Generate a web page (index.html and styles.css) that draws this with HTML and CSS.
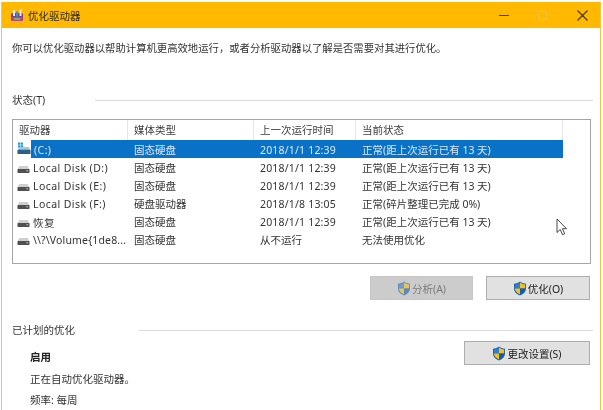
FILE: index.html
```html
<!DOCTYPE html>
<html lang="zh-CN">
<head>
<meta charset="utf-8">
<title>优化驱动器</title>
<link rel="stylesheet" href="styles.css">
</head>
<body>
<svg class="defs" width="0" height="0" aria-hidden="true">
  <defs>
    <symbol id="shield" viewBox="0 0 14 15">
      <path d="M7 .5C5.200 1.900 3.200 2.600 1 2.700v5c0 3 2.300 5.300 6 6.800 3.700-1.500 6-3.800 6-6.800v-5C10.800 2.600 8.800 1.900 7 .5z" fill="#1f5fa8"/>
      <path d="M7 1.500V7.500H1.900V3.500C3.900 3.300 5.500 2.600 7 1.500z" fill="#2f7fd0"/>
      <path d="M7 1.500C8.500 2.600 10.100 3.300 12.100 3.500V7.500H7z" fill="#f5c21b"/>
      <path d="M1.900 7.500H7V13.400C4 12.100 2 10.100 1.900 7.500z" fill="#f5c21b"/>
      <path d="M7 7.500H12.100C12 10.100 10 12.100 7 13.400z" fill="#1b5ba6"/>
    </symbol>
    <symbol id="drive" viewBox="0 0 14 8" preserveAspectRatio="none">
      <path d="M2.500 0H11.500L13.500 4H.5z" fill="#cfcfcf"/>
      <rect x=".5" y="3.500" width="13" height="4.500" rx=".8" fill="#505050"/>
      <rect x="10" y="5" width="2" height="1" fill="#d5d5d5"/>
    </symbol>
    <symbol id="sysdrive" viewBox="0 0 15 14">
      <path d="M1 1h2.500v2.500H1zM4 1h2.500v2.500H4zM1 4h2.500v2.500H1zM4 4h2.500v2.500H4z" fill="#2a9ad6"/>
      <path d="M2.500 6H12.500L14.500 9.500H.5z" fill="#9fc7de"/>
      <rect x=".5" y="9" width="14" height="4.500" rx=".6" fill="#2c5f86"/>
    </symbol>
  </defs>
</svg>
<main class="window">
  <header class="titlebar">
    <svg class="app-icon" viewBox="0 0 14 14" width="14" height="14" aria-hidden="true">
      <rect x="1" y="5" width="12" height="8" rx="1.500" fill="#7b3f98"/>
      <rect x="1.500" y="9" width="11" height="4" rx="1" fill="#c8456e"/>
      <rect x="3" y="2" width="2" height="6" fill="#e9e4ee"/>
      <rect x="6" y="3.500" width="2" height="5" fill="#4f88c7"/>
      <rect x="9.500" y="1" width="2" height="7" fill="#dfe6ef"/>
      <rect x="4" y="10" width="6" height="2" fill="#6fb35a"/>
    </svg>
    <span class="title-text">优化驱动器</span>
    <div class="controls">
      <span class="ctl ctl-min"></span>
      <span class="ctl ctl-max"></span>
      <svg class="ctl-close" viewBox="0 0 11 11" width="11" height="11" aria-hidden="true">
        <path d="M.5.5l10 10M10.500.5l-10 10" stroke="#3a3320" stroke-width="1.100" fill="none"/>
      </svg>
    </div>
  </header>

  <div class="content">
    <p class="intro">你可以优化驱动器以帮助计算机更高效地运行，或者分析驱动器以了解是否需要对其进行优化。</p>

    <div class="group-head group-status">
      <span>状态(T)</span>
      <i class="rule"></i>
    </div>

    <section class="listbox">
      <div class="row head">
        <div class="cell c1">驱动器</div>
        <div class="cell c2">媒体类型</div>
        <div class="cell c3">上一次运行时间</div>
        <div class="cell c4">当前状态</div>
      </div>
      <div class="row selected">
        <div class="cell c1"><svg class="ico sys"><use href="#sysdrive"/></svg><span class="name">(C:)</span></div>
        <div class="cell c2">固态硬盘</div>
        <div class="cell c3 date">2018/1/1 12:39</div>
        <div class="cell c4">正常(距上次运行已有 13 天)</div>
      </div>
      <div class="row">
        <div class="cell c1"><svg class="ico"><use href="#drive"/></svg><span class="name">Local Disk (D:)</span></div>
        <div class="cell c2">固态硬盘</div>
        <div class="cell c3 date">2018/1/1 12:39</div>
        <div class="cell c4">正常(距上次运行已有 13 天)</div>
      </div>
      <div class="row">
        <div class="cell c1"><svg class="ico"><use href="#drive"/></svg><span class="name">Local Disk (E:)</span></div>
        <div class="cell c2">固态硬盘</div>
        <div class="cell c3 date">2018/1/1 12:39</div>
        <div class="cell c4">正常(距上次运行已有 13 天)</div>
      </div>
      <div class="row">
        <div class="cell c1"><svg class="ico"><use href="#drive"/></svg><span class="name">Local Disk (F:)</span></div>
        <div class="cell c2">硬盘驱动器</div>
        <div class="cell c3 date">2018/1/8 13:05</div>
        <div class="cell c4">正常(碎片整理已完成 0%)</div>
      </div>
      <div class="row">
        <div class="cell c1"><svg class="ico"><use href="#drive"/></svg><span class="name">恢复</span></div>
        <div class="cell c2">固态硬盘</div>
        <div class="cell c3 date">2018/1/1 12:39</div>
        <div class="cell c4">正常(距上次运行已有 13 天)</div>
      </div>
      <div class="row">
        <div class="cell c1"><svg class="ico"><use href="#drive"/></svg><span class="name name-long">\\?\Volume{1de8...</span></div>
        <div class="cell c2">固态硬盘</div>
        <div class="cell c3">从不运行</div>
        <div class="cell c4">无法使用优化</div>
      </div>
    </section>

    <div class="actions">
      <button class="btn btn-analyze" disabled><svg class="shield"><use href="#shield"/></svg>分析(A)</button>
      <button class="btn btn-optimize"><svg class="shield"><use href="#shield"/></svg>优化(O)</button>
    </div>

    <div class="group-head group-plan">
      <span>已计划的优化</span>
      <i class="rule"></i>
    </div>

    <div class="plan">
      <div class="plan-text">
        <strong>启用</strong>
        <span>正在自动优化驱动器。</span>
        <span>频率: 每周</span>
      </div>
      <button class="btn btn-settings"><svg class="shield"><use href="#shield"/></svg>更改设置(S)</button>
    </div>
  </div>

  <svg class="cursor" viewBox="0 0 12 18" width="12" height="18" aria-hidden="true">
    <path d="M1 1v13.500l3.200-3 2.300 5.200 2.200-1-2.300-5H10.500z" fill="#fff" stroke="#333" stroke-width=".9" stroke-linejoin="round"/>
  </svg>
</main>
</body>
</html>
```
FILE: styles.css
```css
* { box-sizing: border-box; }
html, body { margin: 0; padding: 0; }
body {
  width: 603px;
  height: 410px;
  overflow: hidden;
  background: #fff;
  font-family: "Noto Sans", "Noto Sans CJK SC", sans-serif;
  font-size: 10.5px;
  color: #333;
}
.defs { position: absolute; }
.window {
  position: relative;
  width: 600px;
  height: 410px;
  margin: 2px 0 0 1px;
  border-left: 1px solid #f3c64a;
  border-right: 1px solid #f3c64a;
  background: #fff;
  overflow: hidden;
  filter: blur(.3px);
}
.titlebar {
  height: 26px;
  background: #ffb900;
  display: flex;
  align-items: center;
  padding-left: 8px;
  color: #2e2a1c;
}
.app-icon { margin-right: 4px; }
.controls {
  margin-left: auto;
  display: flex;
  align-items: center;
  padding-right: 12px;
}
.ctl-min { width: 10px; height: 1px; background: #4a3d10; margin-right: 29px; }
.ctl-max { width: 9px; height: 9px; border: 1px solid #f0c23c; margin-right: 30px; }
.content { padding: 0 9px 0 10px; }
.intro { margin: 0; padding-top: 12px; line-height: 16px; height: 28px; font-size: 10.35px; white-space: nowrap; }
.group-head { display: flex; align-items: center; line-height: 14px; }
.group-status { margin-top: 37px; }
.group-status .rule { margin-left: 50px; }
.group-plan { margin-top: 23px; }
.group-plan .rule { margin-left: 64px; }
.group-head .rule { flex: 1; height: 1px; background: #d9d9d9; margin-right: -2px; }
.listbox {
  margin-top: 12px;
  height: 145px;
  border: 1px solid #a5a5a5;
  background: #fff;
}
.row { display: grid; width: 550px; grid-template-columns: 115px 126px 102px 207px; height: 18px; align-items: center; }
.head { height: 20px; color: #3c3c3c; }
.head .cell { height: 20px; line-height: 20px; border-right: 1px solid #e6e6e6; }
.cell { padding-left: 6px; white-space: nowrap; overflow: hidden; }
.c1 { display: flex; align-items: center; overflow: visible; }
.row:not(.head) .c1 { padding-left: 4px; }
.ico { width: 13px; height: 7px; margin-top: 4px; margin-right: 3px; flex: none; }
.ico.sys { width: 14px; height: 14px; margin-top: -3px; margin-right: 2px; }
.name { letter-spacing: .42px; padding-top: 2px; }
.name-long { letter-spacing: .15px; }
.selected { background: linear-gradient(to right, transparent 18px, #0a72c6 18px); color: #dbe9f5; }
.selected .name { padding-left: 1px; }
.date { letter-spacing: .18px; padding-top: 2px; }
.actions { display: flex; justify-content: flex-end; gap: 13px; margin-top: 12px; padding-right: 1px; }
.btn {
  height: 24px;
  display: inline-flex;
  align-items: center;
  justify-content: center;
  font: inherit;
  color: #222;
  background: #e1e1e1;
  border: 1px solid #adadad;
  padding: 0;
}
.btn-analyze { width: 103px; background: #cccccc; border-color: #c6c6c6; color: #7b7b7b; }
.btn-optimize { width: 104px; }
.btn-analyze .shield { opacity: .6; }
.btn-settings { width: 126px; margin-top: 4px; margin-right: 1px; }
.shield { width: 14px; height: 15px; margin-right: 1px; }
.plan { display: flex; justify-content: space-between; align-items: flex-start; }
.plan-text { display: flex; flex-direction: column; padding: 13px 0 0 18px; line-height: 14px; gap: 7.5px; }
.plan-text strong { font-weight: 700; color: #222; }
.cursor { position: absolute; left: 554px; top: 216px; }
```
